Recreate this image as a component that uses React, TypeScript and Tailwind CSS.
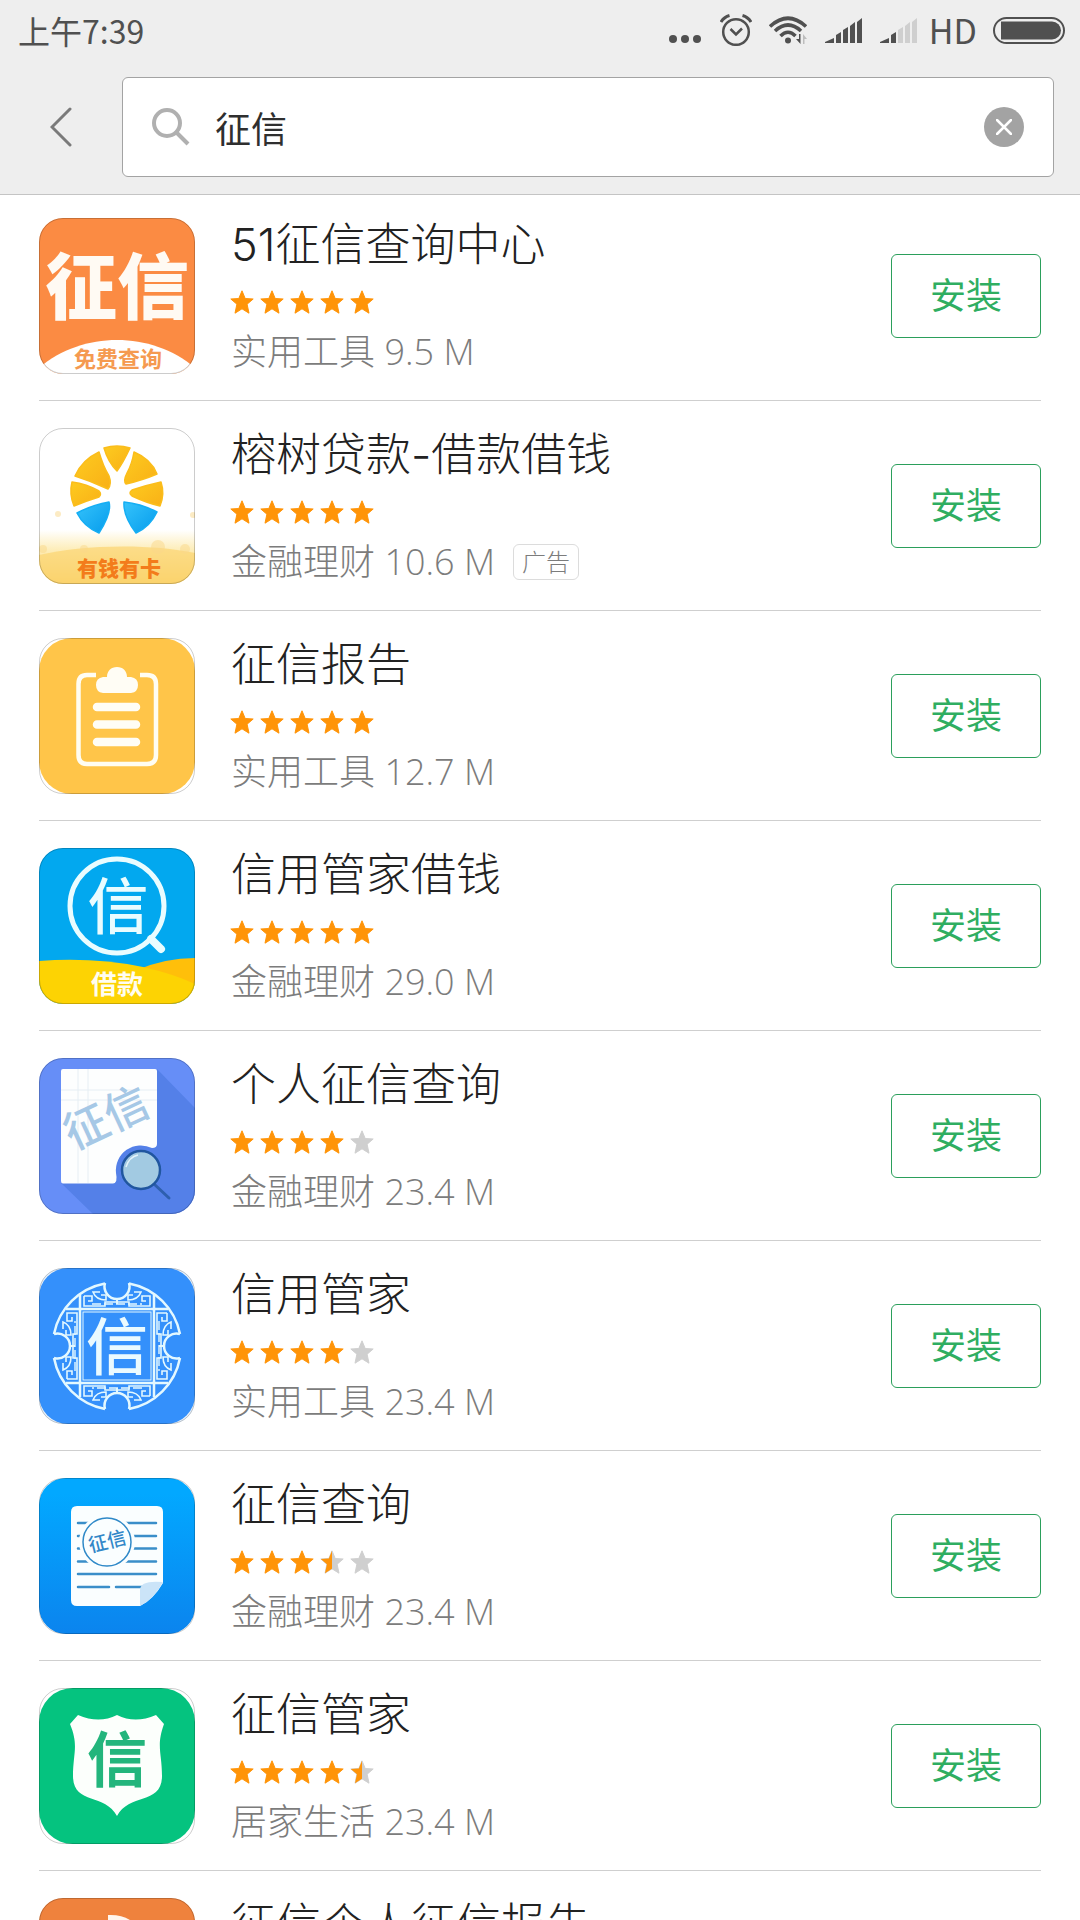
import { useState, type ReactNode } from 'react';

const GLYPH_FONT = '"Noto Sans CJK SC", sans-serif';

function Glyphs(props: {
  x: number;
  y: number;
  size: number;
  fill: string;
  weight?: number;
  rotate?: number;
  children: string;
}) {
  const { x, y, size, fill, weight = 500, rotate = 0, children } = props;
  return (
    <text
      x={x}
      y={y}
      fontSize={size}
      fontWeight={weight}
      fontFamily={GLYPH_FONT}
      fill={fill}
      textAnchor="middle"
      transform={rotate ? `rotate(${rotate} ${x} ${y})` : undefined}
    >
      {children}
    </text>
  );
}

function Art({ children }: { children: ReactNode }) {
  return (
    <svg viewBox="0 0 156 156" className="block size-full" aria-hidden="true">
      {children}
    </svg>
  );
}

function CreditCenterArt() {
  return (
    <Art>
      <rect width="156" height="156" fill="#fb8b43" />
      <path d="M0 156V150C22 131 50 122 78 122s56 9 78 28v6Z" fill="#fff" />
      <Glyphs x={78} y={95} size={72} weight={900} fill="#fffaf3">征信</Glyphs>
      <Glyphs x={79} y={149} size={22} weight={700} fill="#f59a50">免费查询</Glyphs>
    </Art>
  );
}

function BanyanArt() {
  return (
    <Art>
      <defs>
        <linearGradient id="banyan-sand" x1="0" y1="0" x2="0" y2="1">
          <stop offset="0" stopColor="#fff" />
          <stop offset="0.35" stopColor="#fdeebc" />
          <stop offset="1" stopColor="#fbcf62" />
        </linearGradient>
        <linearGradient id="banyan-leaf" x1="0" y1="0" x2="1" y2="1">
          <stop offset="0" stopColor="#fdcb20" />
          <stop offset="1" stopColor="#f9b016" />
        </linearGradient>
        <linearGradient id="banyan-trunk" x1="0" y1="0" x2="1" y2="1">
          <stop offset="0" stopColor="#35c3fb" />
          <stop offset="1" stopColor="#069cec" />
        </linearGradient>
      </defs>
      <rect width="156" height="156" fill="#fff" />
      <rect y="102" width="156" height="54" fill="url(#banyan-sand)" />
      <path d="M0 127C40 117 110 115 156 125v31H0Z" fill="#fbd470" opacity="0.7" />
      <g fill="#fbd98a" opacity="0.5">
        <circle cx="4" cy="121" r="4" />
        <circle cx="45" cy="121" r="4" />
        <circle cx="119" cy="119" r="7" />
        <circle cx="146" cy="121" r="5" />
        <circle cx="19" cy="86" r="3" />
        <circle cx="154" cy="87" r="3" />
      </g>
      <g fill="url(#banyan-leaf)" stroke="#fbbd1b" strokeWidth="1.5" strokeLinejoin="round">
        <path d="M65 20Q78 16 91 20Q84 35 78 43Q69 34 65 20Z" />
        <path d="M60 24Q43 32 36 48Q52 53 69 61Q73 56 70 48Q64 38 60 24Z" />
        <path d="M95 24Q112 31 118 46Q104 52 87 56Q84 53 88 45Q93 36 95 24Z" />
        <path d="M33 54Q30 66 35 78Q47 73 60 69Q63 66 60 63Q48 56 33 54Z" />
        <path d="M122 54Q126 66 121 78Q108 75 93 68Q89 65 93 62Q108 57 122 54Z" />
      </g>
      <g fill="url(#banyan-trunk)" stroke="#15aef4" strokeWidth="1.5" strokeLinejoin="round">
        <path d="M38 85Q53 77 70 74Q73 85 60 105Q45 99 38 85Z" />
        <path d="M85 74Q103 76 118 84Q111 99 97 105Q84 88 85 74Z" />
      </g>
      <Glyphs x={80} y={148} size={21} weight={900} fill="#f37c1b">有钱有卡</Glyphs>
    </Art>
  );
}

function ClipboardArt() {
  return (
    <Art>
      <rect width="156" height="156" fill="#fff" />
      <rect width="156" height="156" rx="33" fill="#ffc549" />
      <path
        d="M57 37H48Q39.500 37 39.500 46V117Q39.500 126 48 126H108Q117 126 117 117V46Q117 37 108 37H101"
        fill="none"
        stroke="#fffdf2"
        strokeWidth="4.500"
      />
      <path
        d="M64 39H68C68 33 72 29 78 29S88 33 88 39H92Q99 40 99 47T92 55H64Q57 54 57 47T64 39Z"
        fill="#fffdf5"
      />
      <path d="M58 69H97M58 86.500H97M58 104H97" stroke="#fffdf5" strokeWidth="8.500" strokeLinecap="round" />
    </Art>
  );
}

function MagnifierArt() {
  return (
    <Art>
      <rect width="156" height="156" fill="#02a8ef" />
      <path d="M98 122Q126 110 156 110v40H98Z" fill="#ffbf0a" />
      <path d="M0 113Q55 109 104 119Q135 126 156 136v20H0Z" fill="#fdd303" />
      <circle cx="78" cy="58" r="47" fill="none" stroke="#e9fcff" strokeWidth="5" />
      <path d="M112 91L122 101" stroke="#e9fcff" strokeWidth="8" strokeLinecap="round" />
      <Glyphs x={79} y={81} size={61} weight={500} fill="#e9fcff">信</Glyphs>
      <Glyphs x={78} y={146} size={26} weight={700} fill="#fffdf0">借款</Glyphs>
    </Art>
  );
}

function PaperArt() {
  return (
    <Art>
      <rect width="156" height="156" fill="#668ef7" />
      <path d="M118 11L156 50V156H54L22 125Z" fill="#5480e8" />
      <path
        d="M24 11H116Q118 11 118 13V86Q118 90 113 90A25 25 0 0 0 77 115Q79 125 74 125.500H24Q22 125.500 22 123V13Q22 11 24 11Z"
        fill="#fdfefe"
      />
      <path d="M39 11V125M49 11V125M22 32H118M22 42H118" stroke="#e6eef4" strokeWidth="1" />
      <Glyphs x={74} y={74} size={44} weight={500} fill="#a6c8e6" rotate={-25}>征信</Glyphs>
      <path d="M115 126L130 140" stroke="#2e5fae" strokeWidth="3" strokeLinecap="round" />
      <circle cx="102" cy="112" r="19" fill="#a2cae2" stroke="#20569f" strokeWidth="2.500" />
      <path d="M87 109Q90 99 99 97" fill="none" stroke="#e4f3fa" strokeWidth="1.500" />
    </Art>
  );
}

function FretSide() {
  return (
    <g>
      <path d="M66 15A12.500 12.500 0 1 0 90 15" strokeWidth="2.500" />
      <path d="M78 30V36" />
      <path d="M45 28H53V33H49M45 28V38H66V34H90V38H111V28H103V33H107" strokeWidth="1.600" />
      <path d="M61 24H54Q57 32 67 32V27H62M95 24H102Q99 32 89 32V27H94" strokeWidth="1.600" />
      <path d="M53 36H103" strokeWidth="1.400" strokeDasharray="9 3" />
    </g>
  );
}

function KnotArt() {
  return (
    <Art>
      <rect width="156" height="156" fill="#e8f2fc" />
      <rect width="156" height="156" rx="29" fill="#3490fb" />
      <g fill="none" stroke="#e3f8ff" strokeWidth="2">
        <path
          d="M90 15.500A64 64 0 0 1 141 66M141 90A64 64 0 0 1 90 141M66 141A64 64 0 0 1 15 90M15 66A64 64 0 0 1 66 15.500"
          strokeWidth="2.500"
        />
        {[0, 90, 180, 270].map((angle) => (
          <g key={angle} transform={`rotate(${angle} 78 78)`}>
            <FretSide />
          </g>
        ))}
        <path d="M27 41H129M27 115H129M41 27V129M115 27V129" strokeWidth="2.500" />
        <rect x="44" y="44" width="68" height="68" strokeWidth="1" />
      </g>
      <Glyphs x={78} y={102} size={62} weight={500} fill="#eafaff">信</Glyphs>
    </Art>
  );
}

function DocumentArt() {
  return (
    <Art>
      <defs>
        <linearGradient id="document-sky" x1="0" y1="0" x2="0" y2="1">
          <stop offset="0.1" stopColor="#02a8ff" />
          <stop offset="1" stopColor="#0b84ee" />
        </linearGradient>
      </defs>
      <rect width="156" height="156" fill="#fff" />
      <rect width="156" height="156" rx="27" fill="url(#document-sky)" />
      <path d="M38 28H118Q124 28 124 34V105Q114 122 101 128H38Q32 128 32 122V34Q32 28 38 28Z" fill="#fafeff" />
      <path
        d="M39 45H117M39 58H117M39 70.500H117M39 83.500H117M39 96H117M39 109H70M77 109H104"
        stroke="#3a8ec9"
        strokeWidth="2.500"
        strokeLinecap="round"
      />
      <path d="M124 104Q101 102 101 112V128Q115 121 124 104Z" fill="#cbe4f8" />
      <circle cx="68" cy="64" r="28" fill="#fafeff" />
      <circle cx="68" cy="64" r="24" fill="#fafeff" stroke="#2f89c8" strokeWidth="1.500" />
      <Glyphs x={70} y={70} size={19} weight={500} fill="#3187c8" rotate={-14}>征信</Glyphs>
    </Art>
  );
}

function ShieldArt() {
  return (
    <Art>
      <rect width="156" height="156" fill="#fff" />
      <rect width="156" height="156" rx="34" fill="#05c37f" />
      <path
        d="M39 27Q60 36 78 27Q96 36 117 27L125 36C117 58 123 65 123 88C123 117 90 105 78 128C66 105 34 117 34 88C34 65 40 58 31 36Z"
        fill="#fcfffc"
      />
      <Glyphs x={78} y={94} size={60} weight={700} fill="#23b57c">信</Glyphs>
    </Art>
  );
}

function ReportArt() {
  return (
    <Art>
      <rect width="156" height="156" fill="#ef823d" />
      <path d="M69 17Q88 16 99 29H69Z" fill="#fff6ee" />
    </Art>
  );
}

type AppEntry = {
  name: string;
  rating: number;
  category: string;
  size: string;
  ad?: boolean;
  art: ReactNode;
};

const apps: AppEntry[] = [
  { name: '51征信查询中心', rating: 5, category: '实用工具', size: '9.5 M', art: <CreditCenterArt /> },
  { name: '榕树贷款-借款借钱', rating: 5, category: '金融理财', size: '10.6 M', ad: true, art: <BanyanArt /> },
  { name: '征信报告', rating: 5, category: '实用工具', size: '12.7 M', art: <ClipboardArt /> },
  { name: '信用管家借钱', rating: 5, category: '金融理财', size: '29.0 M', art: <MagnifierArt /> },
  { name: '个人征信查询', rating: 4, category: '金融理财', size: '23.4 M', art: <PaperArt /> },
  { name: '信用管家', rating: 4, category: '实用工具', size: '23.4 M', art: <KnotArt /> },
  { name: '征信查询', rating: 3.5, category: '金融理财', size: '23.4 M', art: <DocumentArt /> },
  { name: '征信管家', rating: 4.5, category: '居家生活', size: '23.4 M', art: <ShieldArt /> },
  { name: '征信个人征信报告', rating: 4, category: '金融理财', size: '23.4 M', art: <ReportArt /> },
];

const STAR = 'M12 0.800L15.200 8.500L23.200 9L17.100 14.200L19 23.200L12 18.800L5 23.200L6.900 14.200L0.800 9L8.800 8.500Z';
const HALF_STAR = 'M12 0.800V18.800L5 23.200L6.900 14.200L0.800 9L8.800 8.500Z';

function Stars({ rating }: { rating: number }) {
  return (
    <div className="-ml-px flex gap-1.5" role="img" aria-label={`${rating} / 5`}>
      {[0, 1, 2, 3, 4].map((i) => {
        const color = rating >= i + 1 ? '#ff9408' : '#cfcfcf';
        return (
          <svg key={i} viewBox="0 0 24 24" className="size-6">
            <path d={STAR} fill={color} stroke={color} strokeWidth="1" strokeLinejoin="round" />
            {rating > i && rating < i + 1 && <path d={HALF_STAR} fill="#ff9408" />}
          </svg>
        );
      })}
    </div>
  );
}

function AppRow({ app }: { app: AppEntry }) {
  return (
    <li className="flex items-center border-b border-[#cfcfcf] pt-[27px] pb-[26px] first:pt-[23px]">
      <div className="size-[156px] shrink-0 overflow-hidden rounded-3xl outline-1 -outline-offset-1 outline-black/20">
        {app.art}
      </div>
      <div className="ml-9 min-w-0 flex-1">
        <h2 className="text-[45px] leading-[54px] font-light text-[#222222]">{app.name}</h2>
        <div className="mt-[18px]">
          <Stars rating={app.rating} />
        </div>
        <p className="mt-4 flex items-center font-['Open_Sans','Noto_Sans_CJK_SC',sans-serif] text-[36px] leading-[44px] font-light text-[#7c7c7c]">
          <span>
            {app.category} {app.size}
          </span>
          {app.ad && (
            <span className="ml-[18px] rounded-md border border-[#dcdcdc] px-2 text-2xl leading-[34px]">广告</span>
          )}
        </p>
      </div>
      <button
        type="button"
        className="h-[84px] w-[150px] shrink-0 rounded-md border border-[#2b9f5b] text-[36px] leading-[44px] text-[#2fae61]"
      >
        安装
      </button>
    </li>
  );
}

function Signal({ level }: { level: number }) {
  const bars = [
    'M0 25V24L9 20V25Z',
    'M11 25V17L16 14V25Z',
    'M18 25V12L23 9V25Z',
    'M25 25V8L30 4V25Z',
    'M32 25V4L37 0V25Z',
  ];
  return (
    <svg viewBox="0 0 37 25" className="h-[25px] w-[37px]" aria-hidden="true">
      {bars.map((d, i) => (
        <path key={d} d={d} fill={i < level ? '#505050' : '#cfcfcf'} />
      ))}
    </svg>
  );
}

function StatusBar() {
  return (
    <div className="flex h-[60px] items-center justify-between pr-[15px] pl-[18px] font-['Noto_Sans_CJK_SC',sans-serif] text-[#505050]">
      <span className="text-[32px] leading-[60px]">上午7:39</span>
      <div className="flex items-center">
        <svg viewBox="0 0 32 32" className="mr-[19px] size-8" fill="currentColor" aria-hidden="true">
          <circle cx="4" cy="25" r="4" />
          <circle cx="16" cy="25" r="4" />
          <circle cx="28" cy="25" r="4" />
        </svg>
        <svg
          viewBox="0 0 32 32"
          className="mr-[17px] size-8"
          fill="none"
          stroke="currentColor"
          strokeWidth="2.500"
          aria-hidden="true"
        >
          <circle cx="16" cy="18" r="12.800" />
          <path d="M1 8Q4 3 9.500 1.500M31 8Q28 3 22.500 1.500" strokeWidth="3" />
          <path d="M10.500 15L16 20.500L22 14.500" />
        </svg>
        <svg viewBox="0 0 38 28" className="mr-[18px] h-7 w-[38px]" fill="none" stroke="currentColor" aria-hidden="true">
          <path d="M1 10.500Q19 -6 37 10.500" strokeWidth="3.600" />
          <path d="M6 15Q19 3 32 15" strokeWidth="3.600" />
          <path d="M11.500 20Q19 12.500 26.500 20" strokeWidth="3.600" />
          <circle cx="19" cy="24.500" r="3" fill="currentColor" stroke="none" />
          <path d="M31.500 18V28L27 23H30V18Z" fill="currentColor" stroke="none" />
          <path d="M34 28V18L38 23H35.500V28Z" fill="#bdbdbd" stroke="none" />
        </svg>
        <Signal level={5} />
        <span className="w-[18px]" />
        <Signal level={2} />
        <span className="ml-3 text-[34px] leading-[60px]">HD</span>
        <svg viewBox="0 0 72 27" className="ml-4 h-[27px] w-[72px]" aria-hidden="true">
          <rect x="1" y="1" width="70" height="25" rx="12.500" fill="none" stroke="currentColor" strokeWidth="2" />
          <path d="M8 4.500H59A9 9 0 0 1 59 22.500H8Z" fill="currentColor" />
        </svg>
      </div>
    </div>
  );
}

export default function App() {
  const [query, setQuery] = useState('征信');
  return (
    <div className="flex h-screen flex-col bg-white font-['Inter','Noto_Sans_CJK_SC',sans-serif]">
      <header className="shrink-0 border-b border-[#c4c4c4] bg-[#eeeeee]">
        <StatusBar />
        <div className="flex items-center pt-[17px] pr-[26px] pb-[17px]">
          <button type="button" aria-label="返回" className="flex h-[100px] w-[122px] items-center justify-center">
            <svg viewBox="0 0 22 40" className="h-10 w-[22px]" fill="none" stroke="#7a7a7a" strokeWidth="3" strokeLinecap="round">
              <path d="M20 2L2 20L20 38" />
            </svg>
          </button>
          <form
            className="flex h-[100px] flex-1 items-center rounded-md border border-[#a3a3a3] bg-white pr-[29px] pl-[29px]"
            onSubmit={(e) => e.preventDefault()}
          >
            <svg viewBox="0 0 38 38" className="size-[38px] shrink-0" fill="none" stroke="#b0b0b0" strokeWidth="4" aria-hidden="true">
              <circle cx="15" cy="15" r="13" />
              <path d="M24 24L36 36" />
            </svg>
            <input
              type="text"
              aria-label="搜索"
              value={query}
              onChange={(e) => setQuery(e.target.value)}
              className="ml-[25px] h-full min-w-0 flex-1 bg-transparent text-[36px] text-[#2f2f2f] outline-none"
            />
            <button
              type="button"
              aria-label="清除"
              onClick={() => setQuery('')}
              className="flex size-10 items-center justify-center rounded-full bg-[#a3a3a3]"
            >
              <svg viewBox="0 0 16 16" className="size-4" fill="none" stroke="#fff" strokeWidth="2.500" strokeLinecap="round">
                <path d="M1 1L15 15M15 1L1 15" />
              </svg>
            </button>
          </form>
        </div>
      </header>
      <main className="min-h-0 flex-1 overflow-y-auto [scrollbar-width:none]">
        <ul className="px-[39px]">
          {apps.map((app) => (
            <AppRow key={app.name} app={app} />
          ))}
        </ul>
      </main>
    </div>
  );
}
